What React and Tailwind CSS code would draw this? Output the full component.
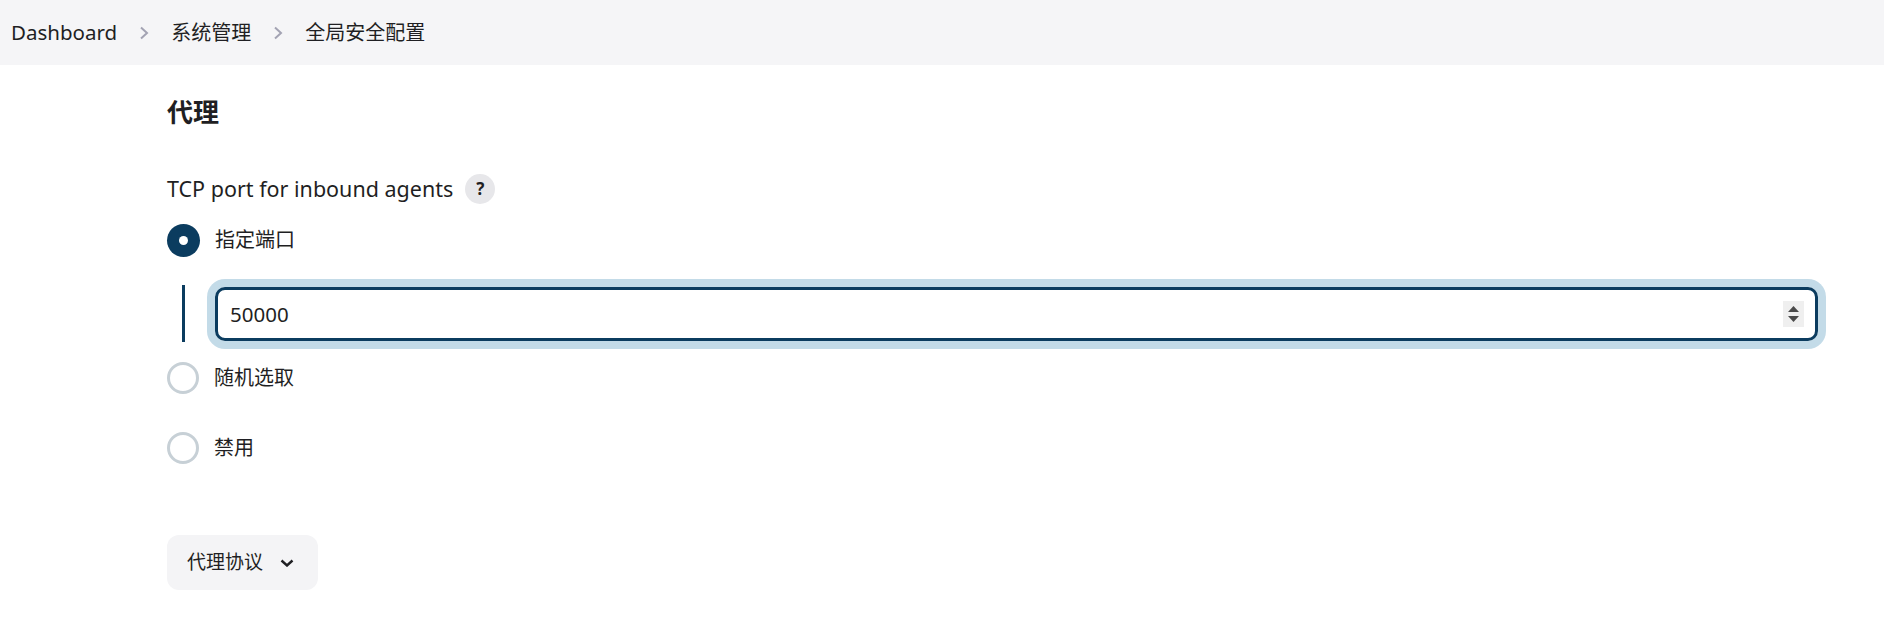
import React, { useState } from 'react'

const font = { fontFamily: '"Noto Sans", "Noto Sans CJK SC", sans-serif' }

const Crumb = () => (
    <svg width="10" height="14" viewBox="0 0 10 14" className="mx-[22px]">
        <polyline points="2,1.5 8,7 2,12.5" fill="none" stroke="#a3a3b3" strokeWidth="2" />
    </svg>
)

const Radio = ({ checked, label, onClick }) => (
    <div className="flex items-center h-[34px] cursor-pointer" onClick={onClick}>
        {checked ? (
            <span className="w-[33px] h-[33px] rounded-full bg-[#0b3c5f] flex items-center justify-center">
                <span className="w-[9px] h-[9px] rounded-full bg-white"></span>
            </span>
        ) : (
            <span className="w-[32px] h-[32px] rounded-full border-[3px] border-[#c7d0d6] bg-white"></span>
        )}
        <span className="ml-[15px] text-[20px] text-[#1f1f23]">{label}</span>
    </div>
)

export default function App() {
    const [mode, setMode] = useState('fixed')
    const [port, setPort] = useState('50000')

    return (
        <div className="min-h-screen bg-white text-[#1f1f23]" style={font}>
            {/* breadcrumb bar */}
            <header className="h-[65px] bg-[#f5f5f7] flex items-center pl-[11px] text-[20px]">
                <span className="text-[20.5px]">Dashboard</span>
                <Crumb />
                <span>系统管理</span>
                <Crumb />
                <span>全局安全配置</span>
            </header>

            <main className="pl-[167px] pr-[66px]">
                <h2 className="mt-[29px] text-[26px] leading-[36px] font-bold">代理</h2>

                <div className="mt-[44px] flex items-center h-[30px]">
                    <span className="text-[21.5px]">TCP port for inbound agents</span>
                    <span className="ml-[12px] w-[30px] h-[30px] rounded-full bg-[#e7e7ea] flex items-center justify-center text-[17px] font-bold text-[#1f1f23]">?</span>
                </div>

                <div className="mt-[19px]">
                    <Radio checked={mode === 'fixed'} label="指定端口" onClick={() => setMode('fixed')} />
                </div>

                <div className="mt-[28px] flex items-center">
                    <div className="w-[3px] h-[57px] bg-[#0b3c5f] ml-[15px]"></div>
                    <div className="relative flex-1 ml-[30px]">
                        <input
                            type="text"
                            value={port}
                            onChange={(e) => setPort(e.target.value)}
                            className="w-full h-[54px] border-[3px] border-[#0b3c5f] rounded-[10px] ring-[8px] ring-[#c3dbe8] pl-[12px] text-[20.5px] outline-none"
                            style={font}
                        />
                        <div className="absolute right-[14px] top-[14px] w-[21px] h-[26px] bg-[#efefef] flex flex-col items-center justify-center gap-[4px]">
                            <svg width="11" height="6" viewBox="0 0 11 6"><polygon points="5.5,0 11,6 0,6" fill="#4a4a4a" /></svg>
                            <svg width="11" height="6" viewBox="0 0 11 6"><polygon points="0,0 11,0 5.5,6" fill="#4a4a4a" /></svg>
                        </div>
                    </div>
                </div>

                <div className="mt-[19px]">
                    <Radio checked={mode === 'random'} label="随机选取" onClick={() => setMode('random')} />
                </div>
                <div className="mt-[36px]">
                    <Radio checked={mode === 'disabled'} label="禁用" onClick={() => setMode('disabled')} />
                </div>

                <button className="mt-[70px] h-[55px] w-[151px] rounded-[12px] bg-[#f4f4f6] flex items-center pl-[20px] text-[19px] text-[#1f1f23]" style={font}>
                    代理协议
                    <svg width="14" height="8" viewBox="0 0 14 8" className="ml-[17px]">
                        <polyline points="1.5,1.5 7,6.5 12.5,1.5" fill="none" stroke="#1f1f23" strokeWidth="2.4" />
                    </svg>
                </button>
            </main>
        </div>
    )
}
